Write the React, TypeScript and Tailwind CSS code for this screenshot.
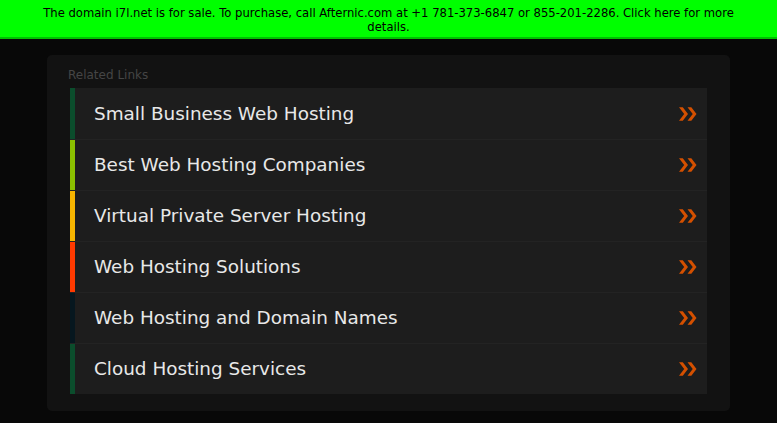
import React from "react";

interface LinkItem {
  label: string;
  bar: string;
}

const links: LinkItem[] = [
  { label: "Small Business Web Hosting", bar: "bg-[#0b4d2c]" },
  { label: "Best Web Hosting Companies", bar: "bg-[#8bc000]" },
  { label: "Virtual Private Server Hosting", bar: "bg-[#f7b500]" },
  { label: "Web Hosting Solutions", bar: "bg-[#ff3a00]" },
  { label: "Web Hosting and Domain Names", bar: "bg-[#06171f]" },
  { label: "Cloud Hosting Services", bar: "bg-[#0b4d2c]" },
];

function Chevrons() {
  return (
    <svg width="18" height="16" viewBox="0 0 19 16" className="mr-[10px]">
      <path d="M0 1 L4 1 L9.5 8 L4 15 L0 15 L5.5 8 Z" fill="#d45000" />
      <path d="M9 1 L13 1 L18.5 8 L13 15 L9 15 L14.5 8 Z" fill="#d45000" />
    </svg>
  );
}

export default function App() {
  return (
    <div className="min-h-[423px] bg-[#080808] font-['DejaVu_Sans',sans-serif]">
      {/* Sale banner */}
      <div className="h-[39px] bg-[#00ff00] border-b-2 border-[#00c000] px-[30px] pt-[6px] text-center text-[11.6px] leading-[14px] text-black">
        The domain i7l.net is for sale. To purchase, call Afternic.com at +1 781-373-6847 or 855-201-2286. Click here for more details.
      </div>

      {/* Related links panel */}
      <div className="mx-[47px] mt-[16px] w-[683px] rounded-[5px] bg-[#121212] pt-[12px] pb-[17px] px-[23px]">
        <div className="-ml-[2px] text-[12px] leading-[16px] text-[#454545]">Related Links</div>
        <div className="mt-[5px] bg-[#1d1d1d]">
          {links.map((l, i) => (
            <div
              key={l.label}
              className={
                "flex h-[51px] items-center " +
                (i > 0 ? "border-t border-[#232323]" : "")
              }
            >
              <div className={"h-full w-[5px] " + l.bar} />
              <span className="ml-[19px] flex-1 text-[18.4px] text-[#e8e8e8]">{l.label}</span>
              <Chevrons />
            </div>
          ))}
        </div>
      </div>
    </div>
  );
}
